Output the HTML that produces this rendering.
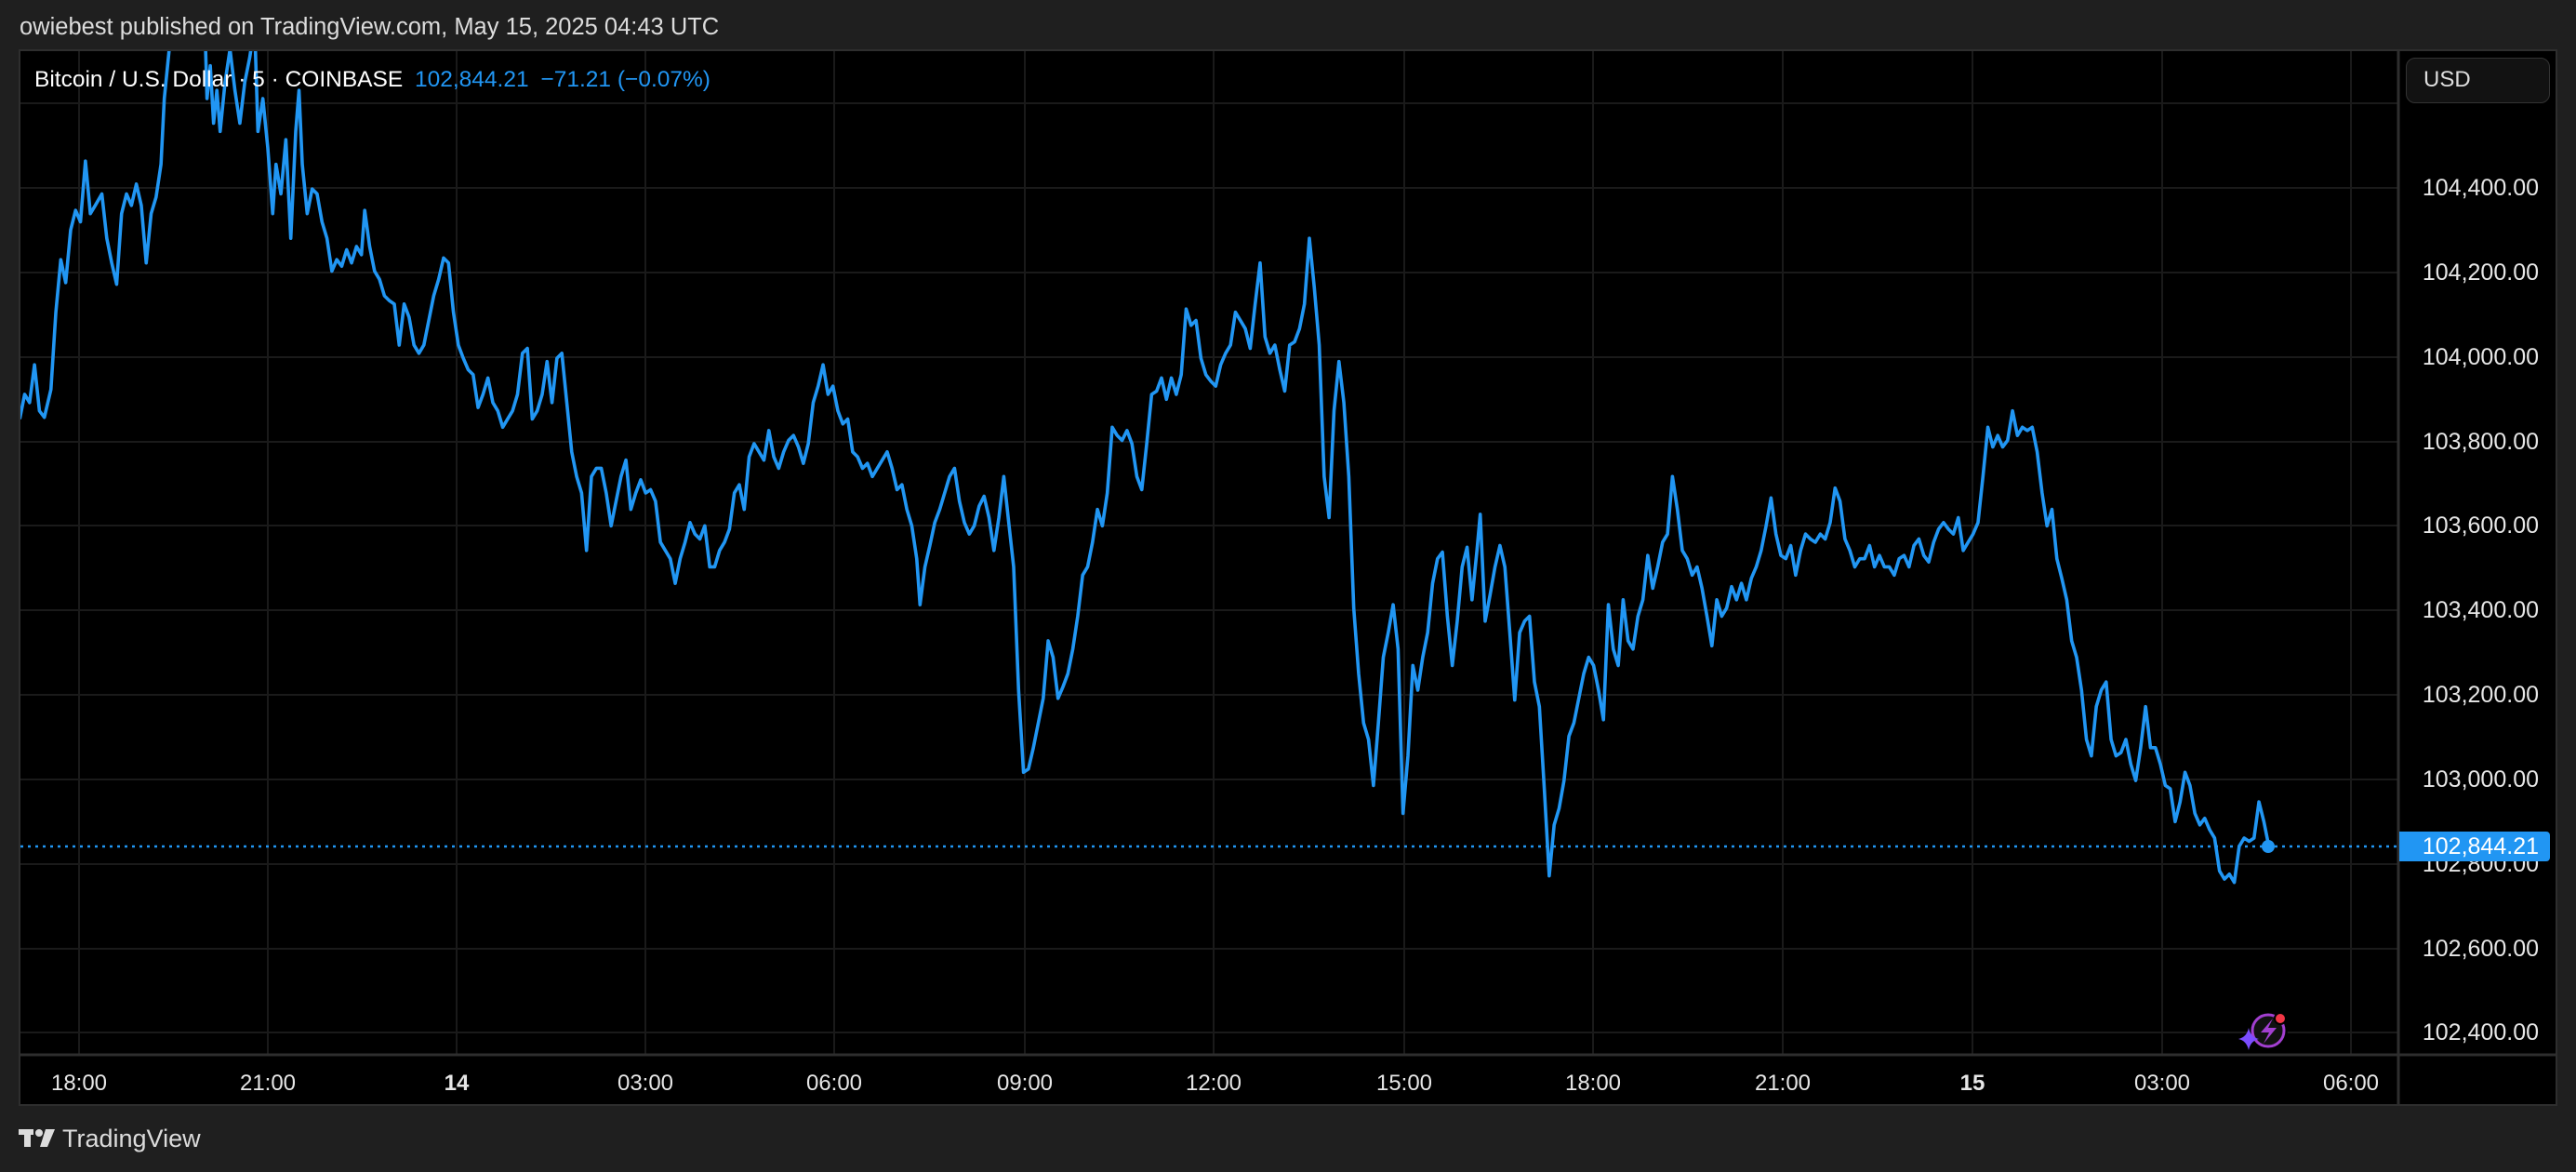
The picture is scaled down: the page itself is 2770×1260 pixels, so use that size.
<!DOCTYPE html>
<html><head><meta charset="utf-8"><style>
html,body{margin:0;padding:0;background:#1f1f1f;width:2770px;height:1260px;overflow:hidden;font-family:"Liberation Sans",sans-serif}
.t{position:absolute;white-space:nowrap}
.pl{position:absolute;right:40px;color:#e6e6e6;font-size:25px;line-height:24px}
.tl{position:absolute;top:1151px;color:#e6e6e6;font-size:24px;transform:translateX(-50%)}
</style></head><body>
<div class="t" style="left:21px;top:15px;font-size:25.5px;color:#dcdcdc">owiebest published on TradingView.com, May 15, 2025 04:43 UTC</div>
<div style="position:absolute;left:20px;top:53px;width:2730px;height:1136px;background:#000;border:2px solid #2e2e2e;box-sizing:border-box"></div>
<svg width="2770" height="1260" style="position:absolute;left:0;top:0">
<defs><clipPath id="c"><rect x="22" y="55" width="2556" height="1078"/></clipPath></defs>
<g stroke="#1a1a1a" stroke-width="2">
<line x1="22" x2="2578" y1="111" y2="111"/><line x1="22" x2="2578" y1="202" y2="202"/><line x1="22" x2="2578" y1="293" y2="293"/><line x1="22" x2="2578" y1="384" y2="384"/><line x1="22" x2="2578" y1="475" y2="475"/><line x1="22" x2="2578" y1="565" y2="565"/><line x1="22" x2="2578" y1="656" y2="656"/><line x1="22" x2="2578" y1="747" y2="747"/><line x1="22" x2="2578" y1="838" y2="838"/><line x1="22" x2="2578" y1="929" y2="929"/><line x1="22" x2="2578" y1="1020" y2="1020"/><line x1="22" x2="2578" y1="1110" y2="1110"/>
<line y1="55" y2="1133" x1="85" x2="85"/><line y1="55" y2="1133" x1="288" x2="288"/><line y1="55" y2="1133" x1="491" x2="491"/><line y1="55" y2="1133" x1="694" x2="694"/><line y1="55" y2="1133" x1="897" x2="897"/><line y1="55" y2="1133" x1="1102" x2="1102"/><line y1="55" y2="1133" x1="1305" x2="1305"/><line y1="55" y2="1133" x1="1510" x2="1510"/><line y1="55" y2="1133" x1="1713" x2="1713"/><line y1="55" y2="1133" x1="1917" x2="1917"/><line y1="55" y2="1133" x1="2121" x2="2121"/><line y1="55" y2="1133" x1="2325" x2="2325"/><line y1="55" y2="1133" x1="2528" x2="2528"/>
</g>
<line x1="2579" x2="2579" y1="53" y2="1189" stroke="#2e2e2e" stroke-width="3"/>
<line x1="20" x2="2750" y1="1134" y2="1134" stroke="#2e2e2e" stroke-width="3"/>
<line x1="22" x2="2578" y1="910" y2="910" stroke="#2196f3" stroke-width="2.5" stroke-dasharray="3 5"/>
<g clip-path="url(#c)">
<polyline transform="scale(1.7666)" fill="none" stroke="#2196f3" stroke-width="3.6" vector-effect="non-scaling-stroke" stroke-linejoin="round" points="12,255 15,240 18,245 21,222 24,250 27,254 31,237 34,190 37,158 40,172 43,140 46,128 49,135 52,98 55,130 58,125 62,118 65,145 68,160 71,173 74,130 77,118 80,125 83,112 86,125 89,160 92,130 95,120 98,100 100,60 102,40 104,20 106,0 108,10 110,-5 113,15 116,5 119,20 122,10 124,-10 126,60 128,40 130,75 132,55 134,80 137,50 140,30 143,55 146,75 149,50 152,35 155,15 157,80 160,60 163,90 166,130 168,100 171,118 174,85 177,145 180,80 182,55 184,100 187,130 190,115 193,118 196,135 199,145 202,165 205,158 208,162 211,152 214,160 217,150 220,155 222,128 225,150 228,165 231,170 234,180 237,183 240,185 243,210 246,185 249,193 252,210 255,215 258,210 261,195 264,180 267,170 270,157 273,160 276,190 279,210 282,218 285,225 288,228 291,248 294,240 297,230 300,245 303,250 306,260 309,255 312,250 315,240 318,215 321,212 324,255 327,250 330,240 333,220 336,245 339,218 342,215 345,245 348,275 351,290 354,300 357,335 360,290 363,285 366,285 369,300 372,320 375,305 378,290 381,280 384,310 387,300 390,292 393,300 396,298 399,305 402,330 405,335 408,340 411,355 414,340 417,330 420,318 423,325 426,328 429,320 432,345 435,345 438,335 441,330 444,322 447,300 450,295 453,310 456,278 459,270 462,275 465,280 468,262 471,278 474,285 477,275 480,268 483,265 486,272 489,282 492,270 495,245 498,235 501,222 504,240 507,235 510,250 513,258 516,255 519,275 522,278 525,285 528,282 531,290 534,285 537,280 540,275 543,285 546,298 549,295 552,310 555,320 558,340 560,368 563,345 566,332 569,318 572,310 575,300 578,290 581,285 584,305 587,318 590,325 593,320 596,308 599,302 602,315 605,335 608,315 611,290 614,318 617,345 620,420 623,470 626,468 629,455 632,440 635,425 638,390 641,400 644,425 647,418 650,410 653,395 656,375 659,350 662,345 665,330 668,310 671,320 674,300 677,260 680,265 683,268 686,262 689,270 692,290 695,298 698,270 701,240 704,238 707,230 710,243 713,230 716,240 719,228 722,188 725,198 728,195 731,218 734,228 737,232 740,235 743,222 746,215 749,210 752,190 755,195 758,200 761,212 764,185 767,160 770,205 773,215 776,210 779,225 782,238 785,210 788,208 791,200 794,185 797,145 800,175 803,210 806,290 809,315 812,250 815,220 818,245 821,290 824,370 827,410 830,440 833,450 836,478 839,440 842,400 845,385 848,368 851,395 854,495 857,460 860,405 863,420 866,400 869,385 872,355 875,340 878,336 881,375 884,405 887,378 890,345 893,333 896,365 899,335 901,313 904,378 907,362 910,345 913,332 916,345 919,385 922,426 925,385 928,378 931,375 934,415 937,430 940,480 943,533 946,502 949,492 952,475 955,448 958,440 961,425 964,410 967,400 970,405 973,420 976,438 979,368 982,395 985,405 988,365 991,390 994,395 997,375 1000,365 1003,338 1006,358 1009,345 1012,330 1015,325 1018,290 1021,310 1024,335 1027,340 1030,350 1033,345 1036,358 1039,375 1042,393 1045,365 1048,375 1051,370 1054,357 1057,365 1060,355 1063,365 1066,352 1069,345 1072,335 1075,320 1078,303 1081,325 1084,338 1087,340 1090,332 1093,350 1096,335 1099,325 1102,328 1105,330 1108,325 1111,328 1114,318 1117,297 1120,305 1123,328 1126,335 1129,345 1132,340 1135,340 1138,332 1141,345 1144,338 1147,345 1150,345 1153,350 1156,340 1159,338 1162,345 1165,332 1168,328 1171,338 1174,342 1177,330 1180,322 1183,318 1186,322 1189,325 1192,315 1195,335 1198,330 1201,325 1204,318 1207,290 1210,260 1213,272 1216,265 1219,272 1222,268 1225,250 1228,265 1231,260 1234,262 1237,260 1240,275 1243,300 1246,320 1249,310 1252,340 1255,352 1258,365 1261,390 1264,400 1267,420 1270,450 1273,460 1276,430 1279,420 1282,415 1285,450 1288,460 1291,458 1294,450 1297,465 1300,475 1303,455 1306,430 1309,455 1312,455 1315,465 1318,478 1321,480 1324,500 1327,488 1330,470 1333,478 1336,495 1339,502 1342,498 1345,505 1348,510 1351,530 1354,535 1357,532 1360,537 1363,515 1366,510 1369,512 1372,510 1375,488 1378,500 1381,515"/>
</g>
<circle cx="2439" cy="910" r="7" fill="#2196f3"/>
<circle cx="2439" cy="1108" r="19" fill="#111" stroke="#000" stroke-width="4"/>
<circle cx="2439" cy="1108" r="17" fill="none" stroke="#a23fd0" stroke-width="3"/>
<path d="M2444 1095 L2431 1110 L2440 1110 L2434 1122 L2448 1105 L2439 1105 Z" fill="#a23fd0"/>
<circle cx="2452" cy="1095" r="6" fill="#f23645" stroke="#000" stroke-width="2"/>
<path d="M2418 1105 Q2420 1115 2429 1117 Q2420 1119 2418 1129 Q2416 1119 2407 1117 Q2416 1115 2418 1105 Z" fill="#7b4dff"/>
<rect x="20" y="1214" width="16" height="6" fill="#dcdcdc"/><rect x="26" y="1214" width="7" height="19" fill="#dcdcdc"/>
<circle cx="42" cy="1218" r="4" fill="#dcdcdc"/><path d="M49 1214 L59 1214 L51 1233 L43 1233 Z" fill="#dcdcdc"/>
</svg>
<div class="t" style="left:37px;top:72px;font-size:24.5px;color:#fff">Bitcoin / U.S. Dollar · 5 · COINBASE <span style="color:#2196f3;margin-left:6px">102,844.21</span> <span style="color:#2196f3;margin-left:6px">−71.21 (−0.07%)</span></div>
<div style="position:absolute;left:2587px;top:62px;width:155px;height:49px;box-sizing:border-box;border:1.5px solid #333;border-radius:10px;background:#121212;color:#ddd;font-size:24px;line-height:46px;padding-left:18px">USD</div>
<div class="pl" style="top:190px">104,400.00</div>
<div class="pl" style="top:281px">104,200.00</div>
<div class="pl" style="top:372px">104,000.00</div>
<div class="pl" style="top:463px">103,800.00</div>
<div class="pl" style="top:553px">103,600.00</div>
<div class="pl" style="top:644px">103,400.00</div>
<div class="pl" style="top:735px">103,200.00</div>
<div class="pl" style="top:826px">103,000.00</div>
<div class="pl" style="top:917px">102,800.00</div>
<div class="pl" style="top:1008px">102,600.00</div>
<div class="pl" style="top:1098px">102,400.00</div>
<div style="position:absolute;left:2580px;top:894px;width:162px;height:32px;background:#2196f3;border-radius:0 4px 4px 0;color:#fff;font-size:25px;line-height:32px;text-align:right;padding-right:12px;box-sizing:border-box">102,844.21</div>
<div class="tl" style="left:85px">18:00</div>
<div class="tl" style="left:288px">21:00</div>
<div class="tl" style="left:491px;font-weight:bold">14</div>
<div class="tl" style="left:694px">03:00</div>
<div class="tl" style="left:897px">06:00</div>
<div class="tl" style="left:1102px">09:00</div>
<div class="tl" style="left:1305px">12:00</div>
<div class="tl" style="left:1510px">15:00</div>
<div class="tl" style="left:1713px">18:00</div>
<div class="tl" style="left:1917px">21:00</div>
<div class="tl" style="left:2121px;font-weight:bold">15</div>
<div class="tl" style="left:2325px">03:00</div>
<div class="tl" style="left:2528px">06:00</div>
<div class="t" style="left:67px;top:1209px;font-size:27px;color:#dcdcdc">TradingView</div>
</body></html>
